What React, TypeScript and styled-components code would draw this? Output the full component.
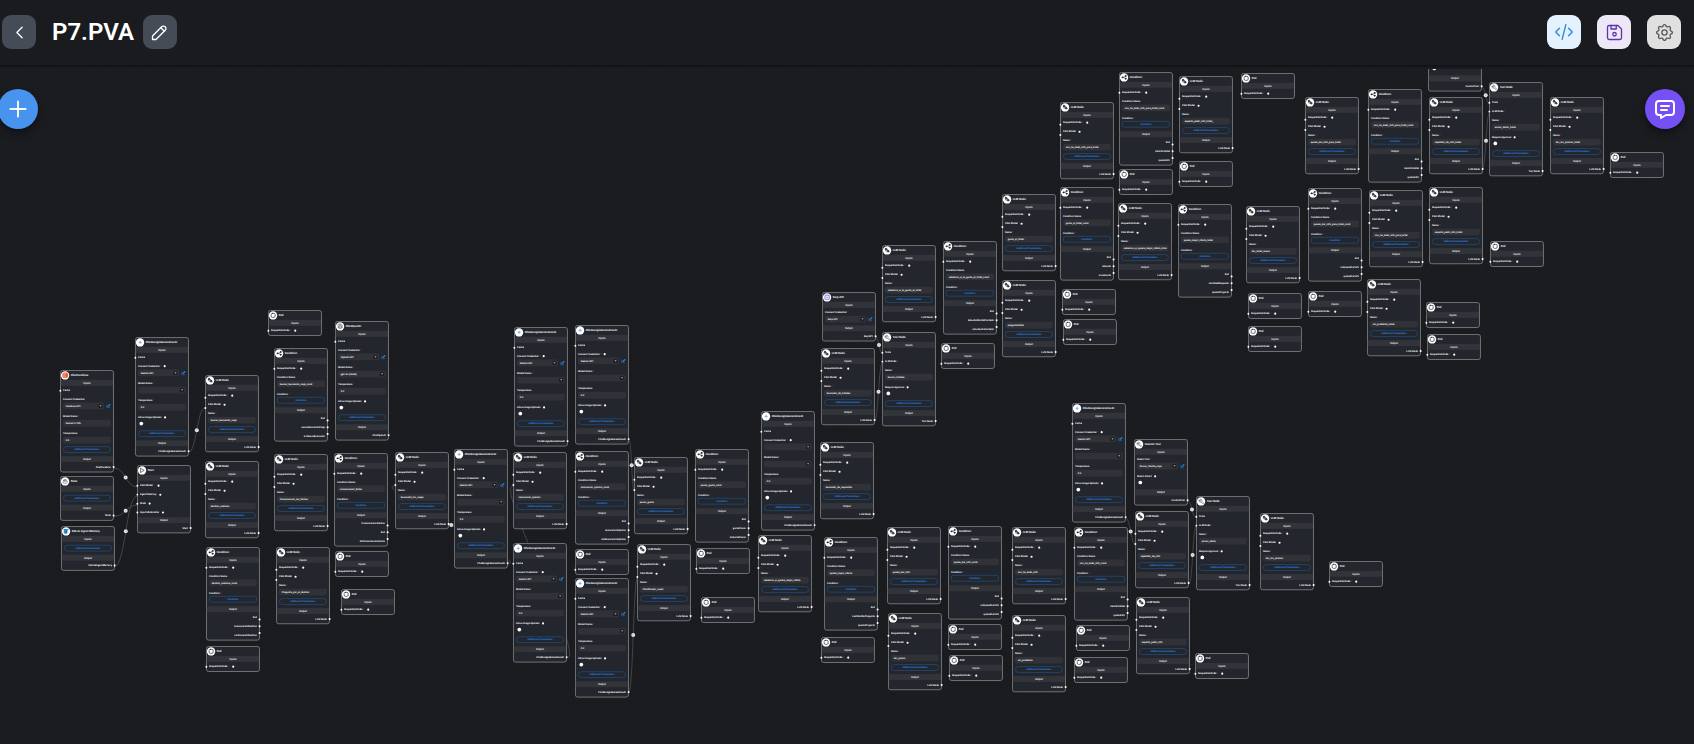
import React from 'react'
import styled, { createGlobalStyle, css } from 'styled-components'
import { TbChevronLeft, TbCode, TbDeviceFloppy, TbMessage, TbPencil, TbPlus, TbSettings } from 'react-icons/tb'

const ZOOM = 0.1779
const HEADER = 69

const GlobalStyle = createGlobalStyle`
  *, *::before, *::after { box-sizing: border-box; }
  html, body { margin: 0; padding: 0; background: #191b1f; }
  body { font-family: Roboto, 'Liberation Sans', sans-serif; color: #fff; overflow: hidden; }
  button { font-family: inherit; }
`

/* ---------- page frame ---------- */

const Page = styled.div`
  display: flex;
  flex-direction: column;
  width: 100vw;
  height: 100vh;
  overflow: hidden;
  background: #191b1f;
`

const TopBar = styled.header`
  display: flex;
  align-items: flex-start;
  justify-content: space-between;
  height: 66px;
  margin-bottom: ${HEADER - 66}px;
  padding: 15px 13px 0 2px;
  background: #191b1f;
  border-bottom: 1px solid #111215;
  box-shadow: 0 1px 1px rgba(0, 0, 0, 0.2);
  flex: none;
`

const BarGroup = styled.div<{ $gap: number }>`
  display: flex;
  align-items: center;
  gap: ${(p) => p.$gap}px;
`

const Title = styled.h1`
  margin: 0 -7px 0 0;
  font-size: 24px;
  line-height: 30px;
  font-weight: 600;
  color: #fff;
`

const tones = {
  plain: css`background: #454b57; color: #fff;`,
  edit: css`background: #454b57; color: #fff; padding-right: 2px;`,
  code: css`background: #e3f2fd; color: #2f86de;`,
  save: css`background: #ede7f6; color: #5e35b1;`,
  settings: css`background: #e0e0e0; color: #555759;`
}

const ToolButton = styled.button<{ $tone: keyof typeof tones }>`
  display: flex;
  align-items: center;
  justify-content: center;
  width: 34px;
  height: 34px;
  padding: 0;
  border: 0;
  border-radius: 9px;
  ${(p) => tones[p.$tone]}
`

const Canvas = styled.main`
  position: relative;
  flex: 1;
  min-height: 0;
  overflow: hidden;
`

const Layer = styled.svg`
  position: absolute;
  inset: 0;
  width: 100%;
  height: 100%;
`

const Fab = styled.button<{ $x: number; $color: string }>`
  position: absolute;
  top: ${89 - HEADER}px;
  left: ${(p) => p.$x}px;
  display: flex;
  align-items: center;
  justify-content: center;
  width: 40px;
  height: 40px;
  padding: 0;
  border: 0;
  border-radius: 50%;
  background: ${(p) => p.$color};
  color: #fff;
  box-shadow: 0 3px 5px -1px rgba(0, 0, 0, 0.3), 0 5px 9px rgba(0, 0, 0, 0.2);
`

/* ---------- node card, drawn at full size and zoomed out ---------- */

const Card = styled.article<{ $x: number; $y: number }>`
  position: absolute;
  left: ${(p) => p.$x}px;
  top: ${(p) => p.$y - HEADER}px;
  width: 303px;
  border: 5.7px solid #7c7d80;
  border-radius: 15px;
  background: #23262c;
  transform: scale(${ZOOM});
  transform-origin: 0 0;
  font-size: 14px;
  font-weight: 600;
  text-rendering: geometricPrecision;
`

const Head = styled.div`
  display: flex;
  align-items: center;
  gap: 8px;
  height: 50px;
  font-size: 16px;
  font-weight: 600;
`

const Avatar = styled.div`
  display: flex;
  align-items: center;
  justify-content: center;
  width: 47px;
  height: 47px;
  border-radius: 50%;
  background: #fff;
`

const Band = styled.div`
  display: flex;
  align-items: center;
  justify-content: center;
  height: 34px;
  margin-bottom: 2px;
  background: #323439;
  color: #e8e8e8;
  font-size: 15px;
`

const Row = styled.div<{ $end?: boolean }>`
  position: relative;
  display: flex;
  align-items: center;
  justify-content: ${(p) => (p.$end ? 'flex-end' : 'flex-start')};
  gap: 5px;
  height: 50.4px;
  padding: 0 12px;
`

const Handle = styled.i<{ $side: 'left' | 'right'; $shift: number }>`
  position: absolute;
  ${(p) => p.$side}: -9px;
  top: ${(p) => 20 + p.$shift}px;
  width: 11px;
  height: 11px;
  border-radius: 40%;
  background: #fff;
`

const Star = styled.span`
  color: #e02b36;
`

const Info = styled.i`
  width: 12px;
  height: 12px;
  margin-left: 10px;
  border-radius: 50%;
  background: #fff;
`

const Field = styled.div`
  display: flex;
  flex-direction: column;
  height: 96px;
  padding: 13px 12px 0;
`

const Label = styled.div`
  display: flex;
  align-items: center;
  gap: 4px;
  height: 20px;
  margin-bottom: 9px;
`

const Line = styled.div`
  display: flex;
  align-items: center;
  gap: 10px;
`

const Input = styled.div`
  display: flex;
  flex: 1;
  align-items: center;
  justify-content: space-between;
  height: 38px;
  padding: 0 10px 0 15px;
  border-radius: 11px;
  background: #303237;
  white-space: nowrap;
  overflow: hidden;
`

const Caret = styled.i`
  display: flex;
  align-items: center;
  justify-content: center;
  width: 23px;
  height: 23px;
  margin-left: auto;
  border-radius: 6px;
  background: #1d1f24;

  &::after {
    content: '';
    border: 6px solid transparent;
    border-top-color: #fff;
    border-bottom: 0;
  }
`

const Knob = styled.i`
  width: 21px;
  height: 21px;
  margin: 5px 0 0 8px;
  border-radius: 50%;
  background: #fff;
`

const PillWrap = styled.div`
  height: 55px;
  padding: 0 12px;

  ${Band} + & {
    height: 70px;
    padding-top: 15px;
  }
`

const Pill = styled.div<{ $tight?: boolean }>`
  display: flex;
  align-items: center;
  justify-content: center;
  height: 37px;
  margin-top: ${(p) => (p.$tight ? -4 : 0)}px;
  border: 4px solid #1f4f80;
  border-radius: ${(p) => (p.$tight ? 12 : 19)}px;
  color: #2a8cec;
`

/* ---------- glyphs ---------- */

type Kind = 'llm' | 'cond' | 'end' | 'google' | 'openai' | 'cerebras' | 'state' | 'sqlite' | 'start' | 'tool' | 'custom' | 'serp'

const Glyph = ({ kind }: { kind: Kind }) => {
  const line = { fill: 'none', stroke: '#222', strokeWidth: 2.6, strokeLinecap: 'round' as const, strokeLinejoin: 'round' as const }
  return (
    <svg width="34" height="34" viewBox="0 0 24 24">
      {kind === 'llm' && (
        <g {...line} strokeWidth={2}>
          <rect x="4" y="4" width="7" height="7" rx="3" fill="#444" />
          <rect x="13" y="13" width="7" height="6" rx="2" fill="#555" />
          <path d="M11 8l4 1v4M7 11v4h5" />
        </g>
      )}
      {kind === 'cond' && (
        <g {...line} strokeWidth={2}>
          <path d="M8 12h2l7-5M10 12l7 5" />
          <circle cx="5" cy="12" r="2.4" fill="#222" />
          <circle cx="18" cy="6.5" r="2.4" fill="#222" />
          <circle cx="18" cy="17.5" r="2.4" fill="#222" />
        </g>
      )}
      {kind === 'end' && <rect x="4" y="4" width="16" height="16" rx="5" {...line} />}
      {kind === 'google' && (
        <g fill="#5aa2ee">
          <path d="M12 4l2.500 5.500 5.500 2.500-5.500 2.500-2.500 5.500-2.500-5.500-5.500-2.500 5.500-2.500z" opacity=".8" />
        </g>
      )}
      {kind === 'openai' && (
        <g {...line} strokeWidth={2} stroke="#444">
          <path d="M12 2l8 5v10l-8 5-8-5V7z" />
          <path d="M12 7l4.500 2.500v5L12 17l-4.500-2.500v-5zM12 2v5M20 17l-4-2.500M4 17l4-2.500" />
        </g>
      )}
      {kind === 'cerebras' && (
        <g>
          <circle cx="12" cy="12" r="12" fill="#ee5a34" />
          <path d="M15 5a8 8 0 1 0 0 14M15 9a4 4 0 1 0 0 6" fill="none" stroke="#fff" strokeWidth="1.500" />
        </g>
      )}
      {kind === 'state' && (
        <g {...line} strokeWidth={2} stroke="#555">
          <rect x="4" y="8" width="16" height="12" rx="3" />
          <path d="M8 8V5h8v3M8 13h8" />
        </g>
      )}
      {kind === 'sqlite' && (
        <g>
          <rect x="2" y="3" width="15" height="18" rx="3" fill="#2d8fd6" />
          <path d="M22 2c-6 3-10 9-11 19" stroke="#0e4a7c" strokeWidth="3" fill="none" />
        </g>
      )}
      {kind === 'start' && <path d="M7 4l13 8-13 8z" {...line} strokeWidth={2.4} />}
      {(kind === 'tool' || kind === 'custom') && (
        <path
          d="M7 10h3V7L6.500 3.500a6 6 0 0 1 8 8l6 6a2 2 0 0 1-3 3l-6-6a6 6 0 0 1-8-8L7 10"
          {...line}
          strokeWidth={2}
          stroke="#444"
        />
      )}
      {kind === 'serp' && (
        <g>
          <circle cx="12" cy="12" r="14" fill="#d9d6ff" />
          <rect x="4" y="4" width="16" height="16" rx="4" fill="#fff" stroke="#5b54d6" strokeWidth="2.500" />
          <path d="M8 12h8M12 8v8" stroke="#5b54d6" strokeWidth="1.500" />
        </g>
      )}
    </svg>
  )
}

const EditGlyph = () => (
  <svg width="27" height="27" viewBox="0 0 24 24" fill="none" stroke="#2486e6" strokeWidth="2.800">
    <path d="M7 7H5a2 2 0 0 0-2 2v10a2 2 0 0 0 2 2h10a2 2 0 0 0 2-2v-2" />
    <path d="M20.400 6.600a2 2 0 0 0-3-3L9 12v3h3z" fill="#2486e6" />
  </svg>
)

/* ---------- parts of a node ---------- */

const AnchorRow = ({ text, required, info, shift = 0 }: { text: string; required?: boolean; info?: boolean; shift?: number }) => (
  <Row>
    <Handle $side="left" $shift={shift} />
    {text}
    {required && <Star>*</Star>}
    {info && <Info />}
  </Row>
)

const OutputRow = ({ text, shift = 0 }: { text: string; shift?: number }) => (
  <Row $end>
    {text}
    <Handle $side="right" $shift={shift} />
  </Row>
)

type ParamProps = {
  label: string
  value?: string
  required?: boolean
  info?: boolean
  select?: boolean
  edit?: boolean
  toggle?: boolean
  action?: string
}

const Param = ({ label, value = '', required, info, select, edit, toggle, action }: ParamProps) => (
  <Field>
    <Label>
      {label}
      {required && <Star>*</Star>}
      {info && <Info />}
    </Label>
    {action ? (
      <Pill $tight>{action}</Pill>
    ) : toggle ? (
      <Knob />
    ) : (
      <Line>
        <Input>
          {value}
          {select && <Caret />}
        </Input>
        {edit && <EditGlyph />}
      </Line>
    )}
  </Field>
)

const MoreParams = () => (
  <PillWrap>
    <Pill>Additional Parameters</Pill>
  </PillWrap>
)

const titles: Record<Kind, string> = {
  llm: 'LLM Node',
  cond: 'Condition',
  end: 'End',
  google: 'ChatGoogleGenerativeAI',
  openai: 'ChatOpenAI',
  cerebras: 'ChatCerebras',
  state: 'State',
  sqlite: 'SQLite Agent Memory',
  start: 'Start',
  tool: 'Tool Node',
  custom: 'Custom Tool',
  serp: 'Serp API'
}

const outputNames: Partial<Record<Kind, string>> = {
  llm: 'LLM Node',
  google: 'ChatGoogleGenerativeAI',
  openai: 'ChatOpenAI',
  cerebras: 'ChatCerebras',
  state: 'State',
  sqlite: 'SQLiteAgentMemory',
  start: 'Start',
  tool: 'Tool Node',
  custom: 'CustomTool',
  serp: 'SerpAPI'
}

const Inputs = ({ kind, value }: { kind: Kind; value?: string }) => {
  switch (kind) {
    case 'llm':
      return (
        <>
          <AnchorRow text="Sequential Node" required info shift={11} />
          <AnchorRow text="Chat Model" info shift={19} />
          <Param label="Name" required value={value} />
          <MoreParams />
        </>
      )
    case 'cond':
      return (
        <>
          <AnchorRow text="Sequential Node" required info />
          <Param label="Condition Name" value={value} />
          <Param label="Condition" required action="Condition" />
        </>
      )
    case 'end':
      return <AnchorRow text="Sequential Node" required info />
    case 'google':
    case 'openai':
      return (
        <>
          <AnchorRow text="Cache" />
          <Param
            label="Connect Credential"
            required
            info={kind === 'google'}
            select
            edit={value !== ''}
            value={value ?? 'Gemini API'}
          />
          <Param label="Model Name" required select value={kind === 'openai' ? 'gpt-4o (latest)' : ''} />
          <Param label="Temperature" value={kind === 'openai' ? '0.2' : '0.3'} />
          <Param label="Allow Image Uploads" info toggle />
          <MoreParams />
        </>
      )
    case 'cerebras':
      return (
        <>
          <AnchorRow text="Cache" />
          <Param label="Connect Credential" select edit value="Cerebras API" />
          <Param label="Model Name" required value="llama3.3-70b" />
          <Param label="Temperature" value="0.0" />
          <MoreParams />
        </>
      )
    case 'state':
    case 'sqlite':
      return <MoreParams />
    case 'start':
      return (
        <>
          <AnchorRow text="Chat Model" required info />
          <AnchorRow text="Agent Memory" info />
          <AnchorRow text="State" info />
          <AnchorRow text="Input Moderation" info />
        </>
      )
    case 'tool':
      return (
        <>
          <AnchorRow text="Tools" />
          <AnchorRow text="LLM Node" required />
          <Param label="Name" required value={value} />
          <Param label="Require Approval" info toggle />
          <MoreParams />
        </>
      )
    case 'custom':
      return (
        <>
          <Param label="Select Tool" required select edit value={value} />
          <Param label="Return Direct" info toggle />
        </>
      )
    case 'serp':
      return <Param label="Connect Credential" required select edit value="Serp API" />
  }
}

type NodeData = [kind: Kind, x: number, y: number, value?: string, outputs?: string[]]

const FlowNode = ({ node: [kind, x, y, value, outputs] }: { node: NodeData }) => (
  <Card $x={x} $y={y}>
    <Head>
      <Avatar>
        <Glyph kind={kind} />
      </Avatar>
      {titles[kind]}
    </Head>
    <Band>Inputs</Band>
    <Inputs kind={kind} value={value} />
    {kind !== 'end' && <Band>Output</Band>}
    {outputs?.map((text, i) => <OutputRow key={i} text={text} shift={13 - i * 12.5} />)}
    {!outputs && outputNames[kind] && <OutputRow text={outputNames[kind]!} />}
  </Card>
)

const nodes: NodeData[] = [
  ['cerebras', 60.3, 370.3],
  ['state', 60.3, 476.2],
  ['sqlite', 61, 526.3],
  ['google', 135.3, 337.3],
  ['start', 137.3, 465.4],
  ['llm', 205.3, 375.3, 'buscar_buscando_viaje'],
  ['llm', 205.3, 460.7, 'destino_valencia'],
  ['cond', 206.3, 547.4, 'destino_valencia_cond', ['End', 'conversandoDestino', 'continuandoDestino']],
  ['end', 206.3, 646.2],
  ['end', 268.3, 310.2],
  ['cond', 274.3, 348.3, 'buscar_buscando_viaje_cond', ['End', 'nuevoBuscandoViaje', 'noNuevoBuscando']],
  ['openai', 335, 321.3, 'OpenAI API'],
  ['llm', 274.3, 454.3, 'Conversacion_las_fechas'],
  ['cond', 334.3, 453.3, 'conversacion_fecha', ['ConversacionFechas', 'End', 'NoConversacionFecha']],
  ['llm', 395.3, 452.3, 'buscando_los_viajes'],
  ['google', 454.3, 449.3],
  ['llm', 276.3, 547.3, 'Pregunta_por_el_destino'],
  ['end', 335.3, 551],
  ['end', 341.3, 589.3],
  ['google', 514.2, 327],
  ['google', 575.4, 325.3],
  ['llm', 513.3, 452.3, 'renovacion_opinion'],
  ['cond', 575.4, 451.3, 'renovacion_opinion_cond', ['End', 'renovacionOpinion', 'noRenovacionOpinion']],
  ['llm', 634.3, 457.3, 'pasos_gusta'],
  ['cond', 695.4, 449.3, 'pasos_gusta_cond', ['End', 'gustaPasos', 'noGustaPasos']],
  ['google', 513.3, 543.3],
  ['end', 575.4, 549.3],
  ['google', 575.3, 578],
  ['llm', 637.3, 544.3, 'Planificador_vuelo'],
  ['end', 696, 548.3],
  ['end', 701.3, 597.3],
  ['serp', 822.3, 292.3],
  ['llm', 882.3, 245.3, 'sabemos_si_le_gusta_el_hotel'],
  ['cond', 943.3, 241.3, 'sabemos_si_le_gusta_el_hotel_cond', ['End', 'leGustaElHotelContado', 'noLeGustaContado']],
  ['llm', 821.3, 348.3, 'buscador_de_hoteles'],
  ['tool', 882.3, 332.3, 'buscar_hoteles'],
  ['end', 941, 343.3],
  ['google', 761.3, 410.7, ''],
  ['llm', 820.3, 442.3, 'buscador_de_requisitos'],
  ['llm', 758.4, 535.4, 'sabemos_si_quiere_mejor_oferta'],
  ['cond', 824.3, 537.3, 'quiere_mejor_oferta', ['End', 'cantidadDePregunta', 'quiereProyecto']],
  ['end', 821, 637],
  ['llm', 887.3, 527.3, 'quiere_dar_info'],
  ['cond', 948.3, 525.7, 'quiere_dar_info_cond', ['End', 'noQuiereDarInfo', 'quiereDarInfo']],
  ['llm', 888.3, 613.3, 'dar_precio'],
  ['end', 948.3, 624],
  ['end', 949.3, 655.3],
  ['llm', 1060.3, 102.3, 'nos_ha_dado_info_para_hotel'],
  ['cond', 1119, 72.3, 'nos_ha_dado_info_para_hotel_cond', ['End', 'danInfoHotel', 'quiereInfo']],
  ['llm', 1179.3, 76, 'experto_pedir_info_hotel_'],
  ['end', 1119, 169.4],
  ['end', 1179.4, 161.4],
  ['llm', 1002.3, 194.4, 'gusta_el_hotel'],
  ['cond', 1060.3, 187.3, 'gusta_el_hotel_cond', ['End', 'leGusta', 'noLeGusta']],
  ['llm', 1118.3, 203.3, 'sabemos_si_quiere_mejor_oferta_hote'],
  ['cond', 1178.3, 204.3, 'quiere_mejor_oferta_hotel', ['End', 'cantidadRequests', 'quiereProyecto']],
  ['llm', 1002.3, 280.3, 'preguntaHotel'],
  ['end', 1062.4, 289],
  ['end', 1063.3, 319.3],
  ['end', 1241.4, 73.3],
  ['llm', 1305.3, 97.2, 'quiere_dar_info_para_hotel'],
  ['cond', 1368.3, 89.2, 'nos_ha_dado_info_para_hotel_cond', ['End', 'danInfoHotel', 'quiereInfo']],
  ['llm', 1246.4, 206.2, 'dar_hotel_nuevo'],
  ['cond', 1308.3, 188.2, 'quiere_dar_info_para_hotel_cond', ['End', 'noQuiereDarInfo', 'quiereDarInfo']],
  ['llm', 1369.4, 189.8, 'nos_ha_dado_info_para_hotel'],
  ['llm', 1367.3, 278.5, 'sin_problema_hotel'],
  ['end', 1248, 293.2],
  ['end', 1248, 326.2],
  ['end', 1308.3, 291.4],
  ['custom', 1428.3, 25.3, 'Enviar_datos'],
  ['llm', 1429, 97.3, 'repetidor_de_info_hotel'],
  ['tool', 1489.3, 82.2, 'enviar_datos_hotel'],
  ['llm', 1550.2, 97.3, 'dar_los_precios_hotel'],
  ['end', 1610.2, 152.3],
  ['llm', 1429.3, 187.3, 'experto_pedir_info_hotel'],
  ['end', 1489.8, 241.3],
  ['end', 1426.4, 301.6],
  ['end', 1427.2, 334.3],
  ['google', 1072.3, 403.3],
  ['custom', 1134.3, 439.3, 'Enviar_cliente_viaje'],
  ['llm', 1012.3, 527.3, 'nos_ha_dado_info'],
  ['cond', 1074.3, 527.3, 'nos_ha_dado_info_cond', ['End', 'danInfoHotel', 'quiereInfo']],
  ['llm', 1135.3, 511.3, 'repetidor_de_info'],
  ['tool', 1196.3, 496.4, 'enviar_datos'],
  ['llm', 1260.3, 513.3, 'dar_los_precios'],
  ['end', 1329.3, 561],
  ['llm', 1012.3, 615.3, 'sin_problema'],
  ['end', 1076.3, 625.3],
  ['end', 1074.3, 657],
  ['llm', 1136.1, 597.3, 'experto_pedir_info'],
  ['end', 1195.3, 653.3]
]

/* ---------- edges ---------- */

type EdgeData = [sx: number, sy: number, tx: number, ty: number]

const edges: EdgeData[] = [
  [114, 468, 137.3, 487],
  [114, 516.3, 137.3, 505],
  [114.3, 566.3, 137.3, 496],
  [188.3, 452.3, 205.3, 408],
  [507.3, 564, 395.3, 486],
  [567, 658, 513.3, 485.7],
  [629, 440, 634.3, 490.7],
  [628.7, 692.7, 637.7, 577.3],
  [875.3, 336.7, 882.7, 353.3],
  [874.3, 421, 882.7, 362.3],
  [1481.7, 87, 1489.7, 103.7],
  [1482.3, 169.3, 1489.7, 112.3],
  [1125.3, 518, 1136, 545],
  [1187.7, 501, 1196.3, 518],
  [1189, 584, 1196.3, 526]
]

const curve = ([sx, sy, tx, ty]: EdgeData) => {
  const dx = tx - sx
  const reach = dx >= 0 ? dx / 2 : 6.25 * Math.sqrt(-dx / ZOOM) * ZOOM
  return `M${sx} ${sy}C${sx + reach} ${sy} ${tx - reach} ${ty} ${tx} ${ty}`
}

const Edge = ({ edge }: { edge: EdgeData }) => {
  const cx = (edge[0] + edge[2]) / 2
  const cy = (edge[1] + edge[3]) / 2
  return (
    <g>
      <path d={curve(edge)} fill="none" stroke="#47484c" strokeWidth="0.9" />
      <circle cx={cx} cy={cy} r="2" fill="#e6e6e6" />
      <path d={`M${cx - 0.7} ${cy - 0.7}l1.400 1.400M${cx + 0.7} ${cy - 0.7}l-1.400 1.400`} stroke="#8a8a8a" strokeWidth="0.3" />
    </g>
  )
}

export default function App() {
  return (
    <Page>
      <GlobalStyle />
      <TopBar>
        <BarGroup $gap={16}>
          <ToolButton $tone="plain" aria-label="Back">
            <TbChevronLeft size={21} strokeWidth={1.5} />
          </ToolButton>
          <Title>P7.PVA</Title>
          <ToolButton $tone="edit" aria-label="Edit name">
            <TbPencil size={21} strokeWidth={1.5} />
          </ToolButton>
        </BarGroup>
        <BarGroup $gap={16}>
          <ToolButton $tone="code" aria-label="API endpoint">
            <TbCode size={22} strokeWidth={1.5} />
          </ToolButton>
          <ToolButton $tone="save" aria-label="Save">
            <TbDeviceFloppy size={21} strokeWidth={1.5} />
          </ToolButton>
          <ToolButton $tone="settings" aria-label="Settings">
            <TbSettings size={21} strokeWidth={1.5} />
          </ToolButton>
        </BarGroup>
      </TopBar>
      <Canvas>
        <Layer>
          <defs>
            <pattern id="grid" width={16 * ZOOM} height={16 * ZOOM} patternUnits="userSpaceOnUse">
              <circle cx="0.180" cy="0.180" r="0.180" fill="#aaa" fillOpacity="0.3" />
            </pattern>
          </defs>
          <rect width="100%" height="100%" fill="url(#grid)" />
          <g transform={`translate(0 ${-HEADER})`}>
            {edges.map((edge, i) => (
              <Edge key={i} edge={edge} />
            ))}
          </g>
        </Layer>
        {nodes.map((node, i) => (
          <FlowNode key={i} node={node} />
        ))}
        <Fab $x={-2} $color="#4793ee" aria-label="Add node">
          <TbPlus size={26} strokeWidth={1.7} />
        </Fab>
        <Fab $x={1645} $color="#7450f5" aria-label="Chat">
          <TbMessage size={24} strokeWidth={2} />
        </Fab>
      </Canvas>
    </Page>
  )
}
